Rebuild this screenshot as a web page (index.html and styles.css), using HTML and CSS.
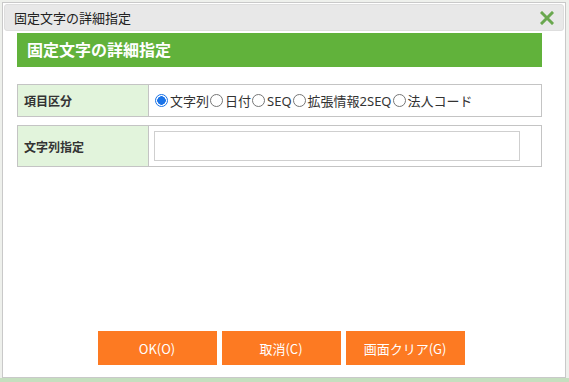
FILE: index.html
```html
<!DOCTYPE html>
<html lang="ja">
<head>
<meta charset="utf-8">
<link rel="stylesheet" href="styles.css">
</head>
<body>
<div class="page">
  <div class="dialog">
    <div class="titlebar">
      <span class="title">固定文字の詳細指定</span>
      <span class="close">
        <svg width="14" height="14" viewBox="0 0 14 14"><path d="M2 2 L12 12 M12 2 L2 12" stroke="#6aa84f" stroke-width="3" stroke-linecap="square"/></svg>
      </span>
    </div>
    <div class="content">
      <div class="header">固定文字の詳細指定</div>
      <div class="row row-radio">
        <div class="label">項目区分</div>
        <div class="value">
          <label class="opt"><span class="radio checked"></span>文字列</label>
          <label class="opt"><span class="radio"></span>日付</label>
          <label class="opt"><span class="radio"></span>SEQ</label>
          <label class="opt"><span class="radio"></span>拡張情報2SEQ</label>
          <label class="opt"><span class="radio"></span>法人コード</label>
        </div>
      </div>
      <div class="row row-input">
        <div class="label">文字列指定</div>
        <div class="value"><div class="input"></div></div>
      </div>
      <div class="spacer"></div>
      <div class="buttons">
        <button class="btn">OK(O)</button>
        <button class="btn">取消(C)</button>
        <button class="btn">画面クリア(G)</button>
      </div>
    </div>
  </div>
  <div class="bgstrip"></div>
</div>
</body>
</html>
```
FILE: styles.css
```css
html, body {
  margin: 0;
  padding: 0;
}
body {
  width: 569px;
  height: 382px;
  overflow: hidden;
  background: #eef0ec;
  font-family: "Noto Sans CJK JP", "Noto Sans", sans-serif;
  color: #333;
}
.page {
  display: flex;
  flex-direction: column;
  height: 382px;
}
.dialog {
  margin: 2px 3px 0 2px;
  height: 374px;
  background: #fff;
  border: 1px solid #c9c9c9;
  display: flex;
  flex-direction: column;
}
.titlebar {
  margin: 1px;
  height: 25px;
  background: #e8e8e8;
  border: 1px solid #dedede;
  border-radius: 3px;
  display: flex;
  align-items: center;
  justify-content: space-between;
  padding: 0 9px 0 9px;
}
.title {
  font-size: 13px;
  color: #222;
}
.close {
  display: flex;
}
.content {
  flex: 1;
  display: flex;
  flex-direction: column;
  padding: 1px 23px 0 14px;
}
.header {
  height: 34px;
  background: #61b23b;
  color: #fff;
  font-weight: bold;
  font-size: 16px;
  line-height: 32px;
  padding-left: 10px;
}
.row {
  display: flex;
  border: 1px solid #c4c4c4;
  margin-top: 17px;
}
.row-radio {
  height: 31px;
}
.row-input {
  height: 40px;
  margin-top: 8px;
}
.label {
  width: 124px;
  background: #e2f4dc;
  border-right: 1px solid #c4c4c4;
  display: flex;
  align-items: center;
  padding-left: 6px;
  font-weight: bold;
  font-size: 12px;
  color: #333;
}
.value {
  flex: 1;
  display: flex;
  align-items: center;
  padding-left: 5px;
  font-family: "Noto Sans", "Noto Sans CJK JP", sans-serif;
  font-size: 13px;
  color: #333;
}
.opt {
  display: flex;
  align-items: center;
}
.radio {
  width: 13px;
  height: 13px;
  border: 1px solid #767676;
  border-radius: 50%;
  margin: 0 2px 0 1px;
  box-sizing: border-box;
  background: #fff;
}
.radio.checked {
  border: 1px solid #1a73e8;
  background: radial-gradient(circle, #1a73e8 0 4px, #fff 4.5px);
}
.input {
  width: 366px;
  height: 30px;
  border: 1px solid #cfcfcf;
  box-sizing: border-box;
}
.spacer {
  flex: 1;
}
.buttons {
  display: flex;
  justify-content: center;
  gap: 5px;
  padding-left: 3px;
  margin-bottom: 12px;
}
.btn {
  width: 119px;
  height: 34px;
  border: none;
  background: #fd7a22;
  color: #fff;
  font-family: "Noto Sans CJK JP", "Noto Sans", sans-serif;
  font-size: 13px;
  padding: 0;
}
.bgstrip {
  flex: 1;
  background: #c5dfbf;
}
```
